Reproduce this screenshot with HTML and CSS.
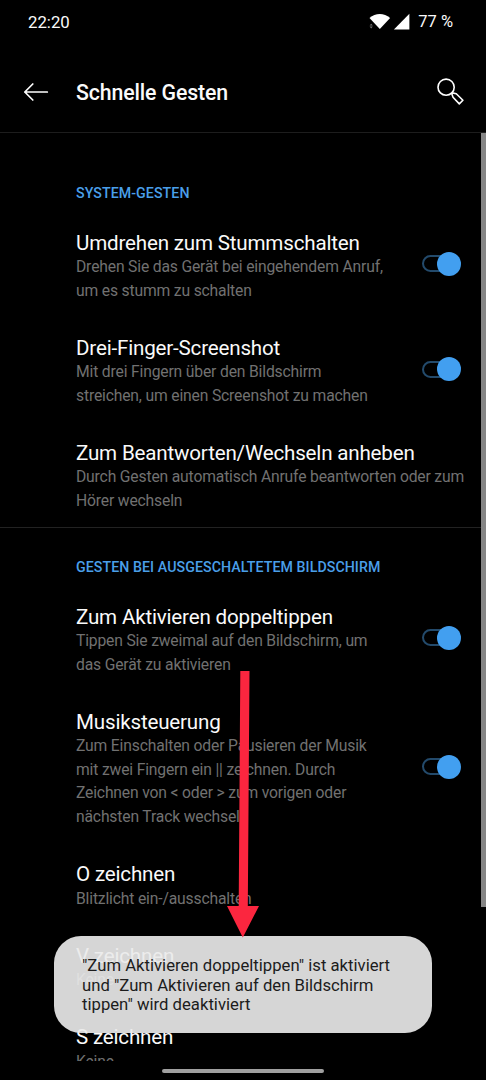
FILE: index.html
```html
<!DOCTYPE html>
<html lang="de">
<head>
<meta charset="utf-8">
<title>Schnelle Gesten</title>
<link rel="stylesheet" href="styles.css">
</head>
<body>
<div class="screen">
  <header class="status">
    <span class="clock">22:20</span>
    <svg class="signals" width="48" height="20" viewBox="0 0 48 20" fill="#fff">
      <path d="M2.500 6.100C8.500 0.600 17.100 0.600 23.100 6.100L12.800 17.100Z"/>
      <path d="M26.900 17.400L42.400 1.700V17.400Z"/>
      <path d="M4.200 11.800l1.600 1.800H2.600zM2.600 14.600h3.200l-1.600 1.800z" fill="#777"/>
    </svg>
    <span class="battery">77 %</span>
  </header>
  <div class="appbar">
    <svg class="back" width="26" height="20" viewBox="0 0 26 20" fill="none" stroke="#fff" stroke-width="1.700" stroke-linecap="round" stroke-linejoin="round"><path d="M24.300 10H1.800M9.800 2L1.800 10L9.800 18"/></svg>
    <h1>Schnelle Gesten</h1>
    <svg class="search" width="28" height="28" viewBox="0 0 28 28" fill="none" stroke="#fff" stroke-width="1.600" stroke-linejoin="round"><circle cx="10.100" cy="9.200" r="8.100"/><path d="M15.700 15.500L16.200 14.900L20.300 15.800L26.900 22.300L23.300 25.900L17 19.300Z"/></svg>
  </div>
  <main class="list">
    <section class="group">
      <h2>SYSTEM-GESTEN</h2>
      <div class="row">
        <div class="text"><h3>Umdrehen zum Stummschalten</h3><p>Drehen Sie das Gerät bei eingehendem Anruf,<br>um es stumm zu schalten</p></div>
        <span class="switch"></span>
      </div>
      <div class="row">
        <div class="text"><h3>Drei-Finger-Screenshot</h3><p>Mit drei Fingern über den Bildschirm<br>streichen, um einen Screenshot zu machen</p></div>
        <span class="switch"></span>
      </div>
      <div class="row">
        <div class="text"><h3>Zum Beantworten/Wechseln anheben</h3><p>Durch Gesten automatisch Anrufe beantworten oder zum<br>Hörer wechseln</p></div>
      </div>
    </section>
    <section class="group screen-off">
      <h2>GESTEN BEI AUSGESCHALTETEM BILDSCHIRM</h2>
      <div class="row">
        <div class="text"><h3>Zum Aktivieren doppeltippen</h3><p>Tippen Sie zweimal auf den Bildschirm, um<br>das Gerät zu aktivieren</p></div>
        <span class="switch"></span>
      </div>
      <div class="row">
        <div class="text"><h3>Musiksteuerung</h3><p>Zum Einschalten oder Pausieren der Musik<br>mit zwei Fingern ein || zeichnen. Durch<br>Zeichnen von &lt; oder &gt; zum vorigen oder<br>nächsten Track wechseln</p></div>
        <span class="switch"></span>
      </div>
      <div class="row"><div class="text"><h3>O zeichnen</h3><p>Blitzlicht ein-/ausschalten</p></div></div>
      <div class="row"><div class="text"><h3>V zeichnen</h3><p>Keine</p></div></div>
      <div class="row"><div class="text"><h3>S zeichnen</h3><p>Keine</p></div></div>
    </section>
    <div class="scrollbar"></div>
  </main>
  <footer class="nav"><span class="pill"></span></footer>
  <div class="toast">"Zum Aktivieren doppeltippen" ist aktiviert<br>und "Zum Aktivieren auf den Bildschirm<br>tippen" wird deaktiviert</div>
  <svg class="arrow" width="34" height="268" viewBox="0 0 34 268" fill="#fb263f"><path d="M14.300 1H23.500L21.800 236H33L16.800 267.500L1 236H12.700Z"/></svg>
</div>
</body>
</html>
```
FILE: styles.css
```css
*, *::before, *::after { box-sizing: border-box; }
body { margin: 0; background: #000; }
h1, h2, h3, p { margin: 0; }

.screen {
  position: relative;
  display: flex;
  flex-direction: column;
  width: 486px;
  height: 1080px;
  overflow: hidden;
  background: #000;
  color: #fafafa;
  font-family: Roboto, "Liberation Sans", sans-serif;
}

.status {
  display: flex;
  align-items: center;
  height: 43px;
  padding: 0 33px 0 28px;
  font-size: 16.800px;
}
.clock { margin-right: auto; }
.signals { margin-right: 3px; }
.battery { font-size: 16.500px; }

.appbar {
  display: flex;
  align-items: center;
  height: 90px;
  padding: 8px 22px 0 23px;
  border-bottom: 1px solid #1d1d1d;
}
.back { margin-right: 27px; }
.appbar h1 {
  flex: 1;
  padding-top: 2px;
  font-size: 21.300px;
  font-weight: 500;
  line-height: 28px;
  letter-spacing: -0.120px;
}

.list {
  position: relative;
  height: 928px;
  overflow: hidden;
}
.group { height: 395px; padding-left: 76px; border-bottom: 1px solid #222; }
.group h2 {
  height: 80.500px;
  padding-top: 50px;
  color: #4a9fe9;
  font-size: 14.200px;
  font-weight: 500;
  line-height: 20px;
  letter-spacing: 0.070px;
  white-space: nowrap;
}
.group.screen-off { height: auto; border: 0; }
.screen-off h2 { height: 59.500px; padding-top: 29px; }

.row {
  display: flex;
  align-items: center;
  padding: 17px 25px 16.500px 0;
}
.text { flex: 1; white-space: nowrap; }
.text h3 {
  font-size: 20.600px;
  font-weight: 400;
  line-height: 24px;
  letter-spacing: -0.190px;
}
.text p {
  padding-top: 0.500px;
  color: #717171;
  font-size: 15.700px;
  line-height: 23.600px;
  letter-spacing: -0.170px;
}

.switch {
  position: relative;
  width: 39px;
  height: 24px;
  margin-bottom: 5px;
}
.switch::before {
  content: "";
  position: absolute;
  left: 0;
  top: 3.500px;
  width: 34px;
  height: 17px;
  border: 2px solid #234a6b;
  border-radius: 9px;
}
.switch::after {
  content: "";
  position: absolute;
  right: 0;
  top: 0;
  width: 24px;
  height: 24px;
  border-radius: 50%;
  background: #429ff0;
}

.scrollbar {
  position: absolute;
  top: 0;
  right: 0;
  width: 5px;
  height: 774px;
  background: #858585;
}

.nav {
  display: flex;
  justify-content: center;
  height: 19px;
  padding-top: 8px;
}
.pill { width: 162px; height: 4px; border-radius: 2px; background: #a0a0a0; }

.toast {
  position: absolute;
  left: 54px;
  top: 936px;
  width: 378px;
  height: 97px;
  padding: 20px 28px;
  border-radius: 27px;
  background: rgba(234, 234, 234, 0.915);
  color: #1c1c1c;
  font-size: 16.700px;
  line-height: 19.500px;
  white-space: nowrap;
}

.arrow { position: absolute; left: 226px; top: 670px; }
```
